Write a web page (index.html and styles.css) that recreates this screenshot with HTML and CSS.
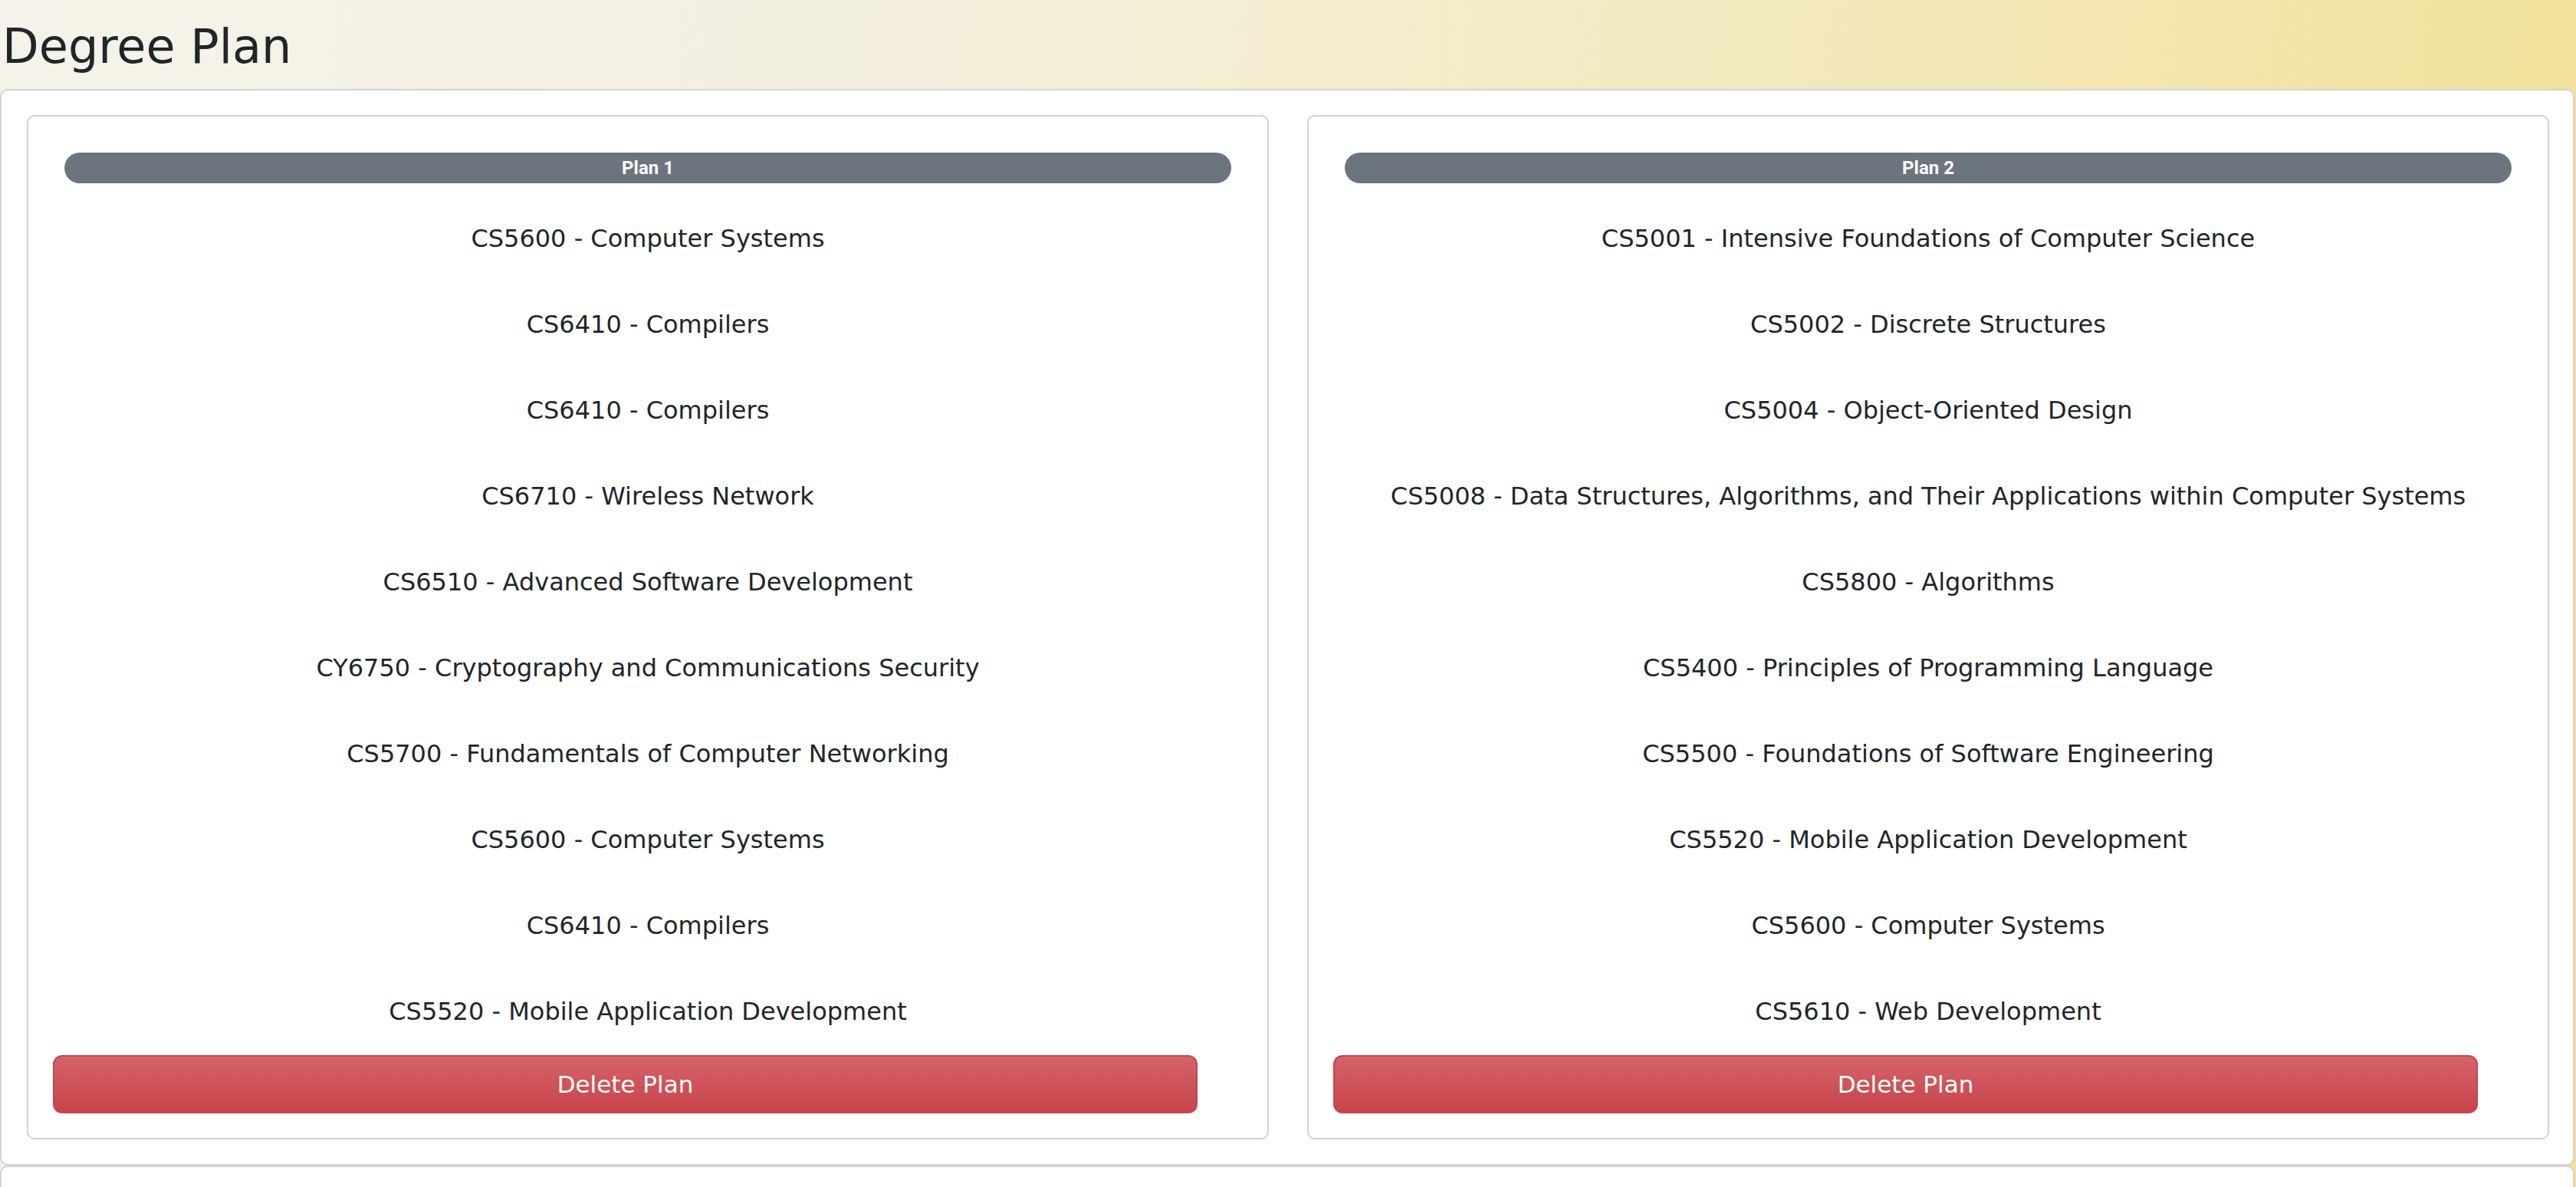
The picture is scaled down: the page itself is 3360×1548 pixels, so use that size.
FILE: index.html
```html
<!DOCTYPE html>
<html lang="en">
<head>
<meta charset="utf-8">
<title>Degree Plan</title>
<link rel="stylesheet" href="styles.css">
</head>
<body>
<header class="page-header">
  <h1 class="page-title">Degree Plan</h1>
</header>
<main class="page-main">
  <section class="panel">
    <div class="plans">
      <article class="plan-card">
        <div class="plan-badge">Plan 1</div>
        <ul class="course-list">
          <li class="course">CS5600 - Computer Systems</li>
          <li class="course">CS6410 - Compilers</li>
          <li class="course">CS6410 - Compilers</li>
          <li class="course">CS6710 - Wireless Network</li>
          <li class="course">CS6510 - Advanced Software Development</li>
          <li class="course">CY6750 - Cryptography and Communications Security</li>
          <li class="course">CS5700 - Fundamentals of Computer Networking</li>
          <li class="course">CS5600 - Computer Systems</li>
          <li class="course">CS6410 - Compilers</li>
          <li class="course">CS5520 - Mobile Application Development</li>
        </ul>
        <button class="btn-delete" type="button">Delete Plan</button>
      </article>
      <article class="plan-card">
        <div class="plan-badge">Plan 2</div>
        <ul class="course-list">
          <li class="course">CS5001 - Intensive Foundations of Computer Science</li>
          <li class="course">CS5002 - Discrete Structures</li>
          <li class="course">CS5004 - Object-Oriented Design</li>
          <li class="course">CS5008 - Data Structures, Algorithms, and Their Applications within Computer Systems</li>
          <li class="course">CS5800 - Algorithms</li>
          <li class="course">CS5400 - Principles of Programming Language</li>
          <li class="course">CS5500 - Foundations of Software Engineering</li>
          <li class="course">CS5520 - Mobile Application Development</li>
          <li class="course">CS5600 - Computer Systems</li>
          <li class="course">CS5610 - Web Development</li>
        </ul>
        <button class="btn-delete" type="button">Delete Plan</button>
      </article>
    </div>
  </section>
  <section class="panel panel-next"></section>
</main>
</body>
</html>
```

FILE: styles.css
```css
html {
  background: linear-gradient(100deg, #f5f3e9 0%, #f4f0e0 30%, #f3e9bd 65%, #f2df93 100%);
  min-height: 100%;
}

body {
  margin: 0;
  font-family: "DejaVu Sans", "Liberation Sans", sans-serif;
  color: #212529;
  overflow: hidden;
}

.page-title {
  margin: 0;
  padding: 25px 0 19px 3px;
  font-size: 62px;
  font-weight: 400;
  line-height: 72px;
  color: #212529;
}

.panel {
  background: #ffffff;
  border: 2px solid #d3d3d3;
  border-radius: 10px;
  padding: 32px 31px 32px 33px;
  margin-right: 2px;
}

.panel-next {
  min-height: 120px;
  padding: 0;
}

.plans {
  display: grid;
  grid-template-columns: 1fr 1fr;
  gap: 50px;
}

.plan-card {
  border: 2px solid #d3d3d3;
  border-radius: 10px;
  padding: 32px;
  display: flex;
  flex-direction: column;
}

.plan-badge {
  margin: 15px 15px 16px;
  height: 40px;
  line-height: 40px;
  background: #6c757d;
  color: #ffffff;
  border-radius: 20px;
  text-align: center;
  font-family: Roboto, "Liberation Sans", sans-serif;
  font-weight: 700;
  font-size: 24px;
}

.course-list {
  list-style: none;
  margin: 0;
  padding: 0;
}

.course {
  font-size: 32px;
  line-height: 48px;
  padding: 32px 0;
  text-align: center;
  white-space: nowrap;
}

.btn-delete {
  align-self: flex-start;
  width: calc(100% - 59px);
  height: 76px;
  margin-top: 1px;
  border: 2px solid #c9444c;
  border-radius: 12px;
  background: linear-gradient(#d5636a, #c8444b);
  color: #ffffff;
  font-family: "DejaVu Sans", "Liberation Sans", sans-serif;
  font-size: 31px;
  cursor: pointer;
}
```
